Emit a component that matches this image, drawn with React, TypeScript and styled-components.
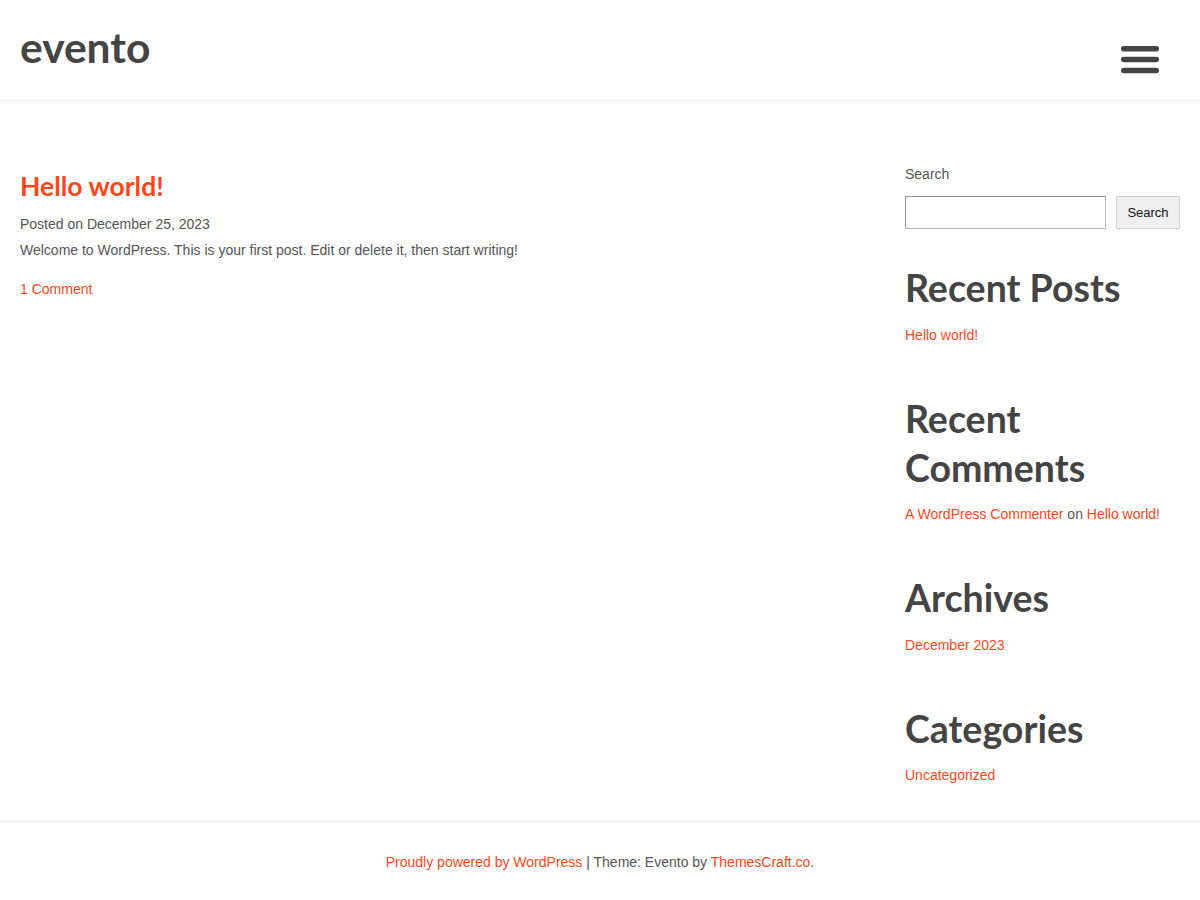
import React from "react";
import styled, { createGlobalStyle } from "styled-components";

const ORANGE = "#ff4719";

const Global = createGlobalStyle`
  html, body { margin: 0; padding: 0; background: #fff; }
  body {
    font-family: "Liberation Sans", Arial, sans-serif;
    font-size: 14px;
    color: #555;
  }
  * { box-sizing: border-box; }
`;

const Page = styled.div`
  width: 1200px;
  min-height: 900px;
  display: flex;
  flex-direction: column;
`;

const Header = styled.header`
  height: 101px;
  border-bottom: 1px solid #eee;
  display: flex;
  align-items: flex-start;
  justify-content: space-between;
  padding: 0 40px 0 20px;
`;

const Logo = styled.a`
  font-family: Lato, sans-serif;
  font-weight: 700;
  font-size: 42.5px;
  line-height: 1;
  color: #444;
  text-decoration: none;
  margin-top: 26px;
`;

const MenuButton = styled.button`
  border: 0;
  background: transparent;
  padding: 0;
  margin-top: 45px;
  width: 40px;
  height: 30px;
  display: flex;
  align-items: center;
  justify-content: center;
  cursor: pointer;
`;

const Content = styled.div`
  display: flex;
  padding: 0 20px;
  gap: 40px;
`;

const Main = styled.main`
  flex: 1;
  padding-top: 69px;
`;

const PostTitle = styled.h2`
  font-family: Lato, sans-serif;
  font-weight: 700;
  font-size: 26.5px;
  line-height: 32px;
  margin: 0 0 12px;
  a { color: ${ORANGE}; text-decoration: none; }
`;

const Meta = styled.div`
  line-height: 21px;
  margin-bottom: 5px;
`;

const Text = styled.p`
  line-height: 21px;
  margin: 0 0 20px;
`;

const Link = styled.a`
  color: ${ORANGE};
  text-decoration: none;
`;

const Sidebar = styled.aside`
  width: 275px;
  padding-top: 63px;
  padding-bottom: 35px;
`;

const SearchLabel = styled.label`
  display: block;
  line-height: 21px;
  margin-bottom: 11px;
`;

const SearchRow = styled.div`
  display: flex;
  gap: 10px;
  margin-bottom: 33px;
`;

const SearchInput = styled.input`
  width: 201px;
  height: 33px;
  border: 1px solid #8f8f8f;
  border-bottom-color: #bbb;
  border-right-color: #bbb;
  padding: 4px 6px;
  font-size: 14px;
`;

const SearchButton = styled.button`
  width: 64px;
  height: 33px;
  background: #efefef;
  border: 1px solid #d0d0d0;
  color: #111;
  font-family: "Liberation Sans", Arial, sans-serif;
  font-size: 13px;
  padding: 0;
`;

const Widget = styled.section`
  margin-bottom: 47px;
  &:last-child { margin-bottom: 0; }
`;

const WidgetTitle = styled.h2`
  font-family: Lato, sans-serif;
  font-weight: 700;
  font-size: 37.5px;
  line-height: 49px;
  color: #444;
  padding-top: 1px;
  margin: 0 0 12.5px;
`;

const WidgetItem = styled.div`
  line-height: 21px;
`;

const Footer = styled.footer`
  border-top: 1px solid #eee;
  height: 79px;
  display: flex;
  align-items: center;
  justify-content: center;
  line-height: 21px;
  padding-top: 3px;
`;

function Bars() {
  return (
    <svg width="40" height="30" viewBox="0 0 40 30" aria-hidden="true">
      <g fill="#444">
        <rect x="1" y="1" width="38" height="5.6" rx="2.8" />
        <rect x="1" y="11.7" width="38" height="5.6" rx="2.8" />
        <rect x="1" y="22.7" width="38" height="5.6" rx="2.8" />
      </g>
    </svg>
  );
}

export default function App() {
  return (
    <Page>
      <Global />
      <Header>
        <Logo href="#">evento</Logo>
        <MenuButton aria-label="Menu">
          <Bars />
        </MenuButton>
      </Header>
      <Content>
        <Main>
          <PostTitle>
            <a href="#">Hello world!</a>
          </PostTitle>
          <Meta>Posted on December 25, 2023</Meta>
          <Text>Welcome to WordPress. This is your first post. Edit or delete it, then start writing!</Text>
          <Link href="#">1 Comment</Link>
        </Main>
        <Sidebar>
          <SearchLabel>Search</SearchLabel>
          <SearchRow>
            <SearchInput type="text" />
            <SearchButton>Search</SearchButton>
          </SearchRow>
          <Widget>
            <WidgetTitle>Recent Posts</WidgetTitle>
            <WidgetItem>
              <Link href="#">Hello world!</Link>
            </WidgetItem>
          </Widget>
          <Widget>
            <WidgetTitle>
              Recent
              <br />
              Comments
            </WidgetTitle>
            <WidgetItem>
              <Link href="#">A WordPress Commenter</Link> on <Link href="#">Hello world!</Link>
            </WidgetItem>
          </Widget>
          <Widget>
            <WidgetTitle>Archives</WidgetTitle>
            <WidgetItem>
              <Link href="#">December 2023</Link>
            </WidgetItem>
          </Widget>
          <Widget>
            <WidgetTitle>Categories</WidgetTitle>
            <WidgetItem>
              <Link href="#">Uncategorized</Link>
            </WidgetItem>
          </Widget>
        </Sidebar>
      </Content>
      <Footer>
        <span>
          <Link href="#">Proudly powered by WordPress</Link> | Theme: Evento by{" "}
          <Link href="#">ThemesCraft.co</Link>.
        </span>
      </Footer>
    </Page>
  );
}
